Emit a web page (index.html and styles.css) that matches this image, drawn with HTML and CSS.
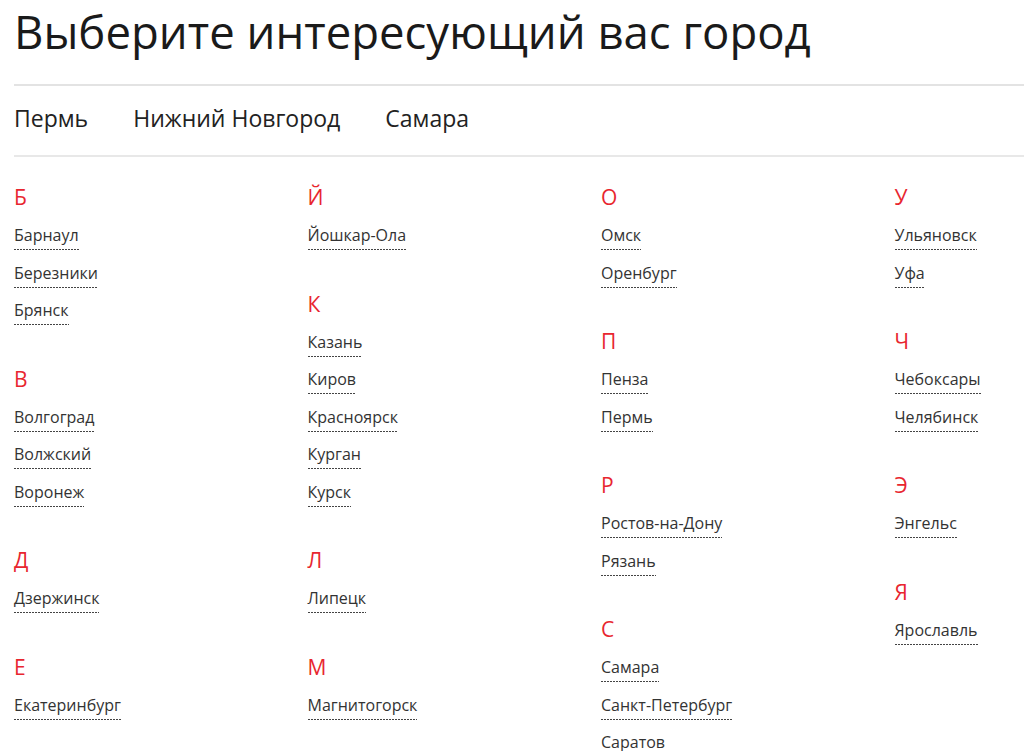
FILE: index.html
```html
<!DOCTYPE html>
<html lang="ru">

<head>
    <meta charset="UTF-8">
    <meta name="viewport" content="width=device-width, initial-scale=1.0">
    <title>Выбор города</title>
    <link rel="stylesheet" href="styles.css">
</head>

<body>
    <h1 class="page-title">Выберите интересующий вас город</h1>

    <ul class="popular">
        <li><a href="#">Пермь</a></li>
        <li><a href="#">Нижний Новгород</a></li>
        <li><a href="#">Самара</a></li>
    </ul>

    <div class="cities">
        <div class="column">
            <div class="group">
                <div class="letter">Б</div>
                <div class="city"><a href="#">Барнаул</a></div>
                <div class="city"><a href="#">Березники</a></div>
                <div class="city"><a href="#">Брянск</a></div>
            </div>
            <div class="group">
                <div class="letter">В</div>
                <div class="city"><a href="#">Волгоград</a></div>
                <div class="city"><a href="#">Волжский</a></div>
                <div class="city"><a href="#">Воронеж</a></div>
            </div>
            <div class="group">
                <div class="letter">Д</div>
                <div class="city"><a href="#">Дзержинск</a></div>
            </div>
            <div class="group">
                <div class="letter">Е</div>
                <div class="city"><a href="#">Екатеринбург</a></div>
            </div>
        </div>

        <div class="column">
            <div class="group">
                <div class="letter">Й</div>
                <div class="city"><a href="#">Йошкар-Ола</a></div>
            </div>
            <div class="group">
                <div class="letter">К</div>
                <div class="city"><a href="#">Казань</a></div>
                <div class="city"><a href="#">Киров</a></div>
                <div class="city"><a href="#">Красноярск</a></div>
                <div class="city"><a href="#">Курган</a></div>
                <div class="city"><a href="#">Курск</a></div>
            </div>
            <div class="group">
                <div class="letter">Л</div>
                <div class="city"><a href="#">Липецк</a></div>
            </div>
            <div class="group">
                <div class="letter">М</div>
                <div class="city"><a href="#">Магнитогорск</a></div>
            </div>
        </div>

        <div class="column">
            <div class="group">
                <div class="letter">О</div>
                <div class="city"><a href="#">Омск</a></div>
                <div class="city"><a href="#">Оренбург</a></div>
            </div>
            <div class="group">
                <div class="letter">П</div>
                <div class="city"><a href="#">Пенза</a></div>
                <div class="city"><a href="#">Пермь</a></div>
            </div>
            <div class="group">
                <div class="letter">Р</div>
                <div class="city"><a href="#">Ростов-на-Дону</a></div>
                <div class="city"><a href="#">Рязань</a></div>
            </div>
            <div class="group">
                <div class="letter">С</div>
                <div class="city"><a href="#">Самара</a></div>
                <div class="city"><a href="#">Санкт-Петербург</a></div>
                <div class="city"><a href="#">Саратов</a></div>
            </div>
        </div>

        <div class="column">
            <div class="group">
                <div class="letter">У</div>
                <div class="city"><a href="#">Ульяновск</a></div>
                <div class="city"><a href="#">Уфа</a></div>
            </div>
            <div class="group">
                <div class="letter">Ч</div>
                <div class="city"><a href="#">Чебоксары</a></div>
                <div class="city"><a href="#">Челябинск</a></div>
            </div>
            <div class="group">
                <div class="letter">Э</div>
                <div class="city"><a href="#">Энгельс</a></div>
            </div>
            <div class="group">
                <div class="letter">Я</div>
                <div class="city"><a href="#">Ярославль</a></div>
            </div>
        </div>
    </div>
</body>

</html>
```

FILE: styles.css
```css
html,
body {
    overflow: hidden;
}

body {
    margin: 0;
    padding: 0 0 0 14px;
    font-family: 'Open Sans', 'Noto Sans', sans-serif;
    background: #fff;
    color: #333;
}

.page-title {
    margin: 0 0 22px;
    font-size: 45.5px;
    font-weight: 400;
    line-height: 62px;
    color: #1a1a1a;
}

.popular {
    list-style: none;
    margin: 0;
    padding: 17px 0 22px;
    display: flex;
    border-top: 2px solid #e3e3e3;
    border-bottom: 2px solid #e8e8e8;
}

.popular li {
    margin-right: 45px;
}

.popular a {
    font-size: 23px;
    line-height: 30px;
    color: #222;
    text-decoration: none;
}

.cities {
    display: grid;
    grid-template-columns: repeat(4, 293.5px);
    padding-top: 20px;
}

.group {
    margin-bottom: 29px;
}

.letter {
    font-size: 21px;
    line-height: 40px;
    color: #e8262f;
}

.city {
    font-size: 16px;
    line-height: 37.5px;
}

.city a {
    color: #333;
    text-decoration: none;
    padding-bottom: 4px;
    background-image: linear-gradient(to right, #444 60%, transparent 0);
    background-size: 3px 1px;
    background-repeat: repeat-x;
    background-position: left bottom;
}
```
